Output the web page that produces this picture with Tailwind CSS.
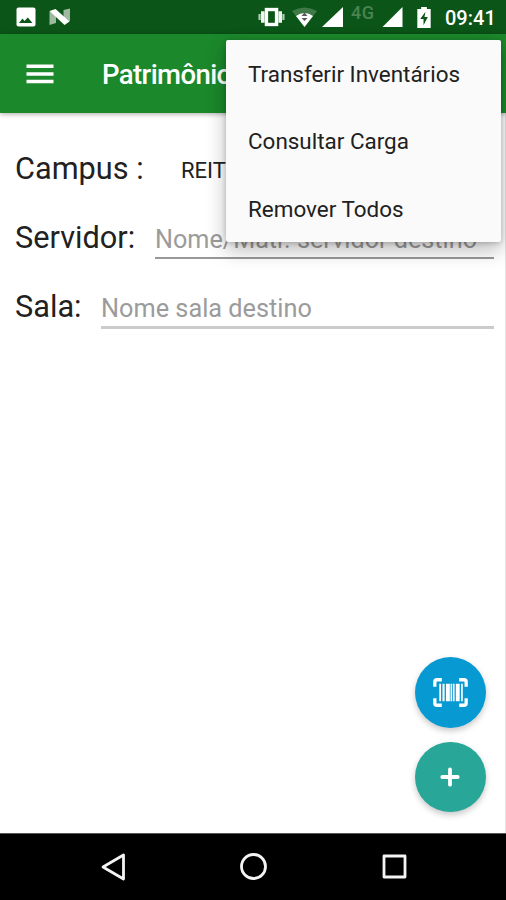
<!DOCTYPE html>
<html lang="pt-BR">
<head>
<meta charset="utf-8">
<title>Patrimônio</title>
<script src="https://cdn.jsdelivr.net/npm/@tailwindcss/browser@4"></script>
</head>
<body class="bg-white">
<div class="relative flex h-[900px] w-[506px] flex-col overflow-hidden bg-white font-[Roboto,sans-serif] text-[#212121]">
  <header class="flex h-[34px] shrink-0 items-center bg-[#0c5518] pl-4 text-white">
    <svg class="size-5" viewBox="0 0 20 20"><rect x=".5" y=".5" width="19" height="19" rx="2" fill="#fff"/><path d="M3 16 6.500 11.500l2 2.500 3.300-3.500 4.700 5.500z" fill="#0c5518"/></svg>
    <svg class="ml-[13px] h-[18px] w-[22px]" viewBox="0 0 22 18"><path d="M.5 3.500 7 6v9L.5 17zM14.500 2 21 .5V13l-6.500 2z" fill="#9dbaa1"/><path d="M.5 3 6.500 1 20.500 13.500 15.500 17z" fill="#fff"/></svg>
    <svg class="ml-[187px] h-5 w-[27px]" viewBox="0 0 28 20"><path d="M7 .5h14v19H7z" fill="#fff"/><path d="M10.500 4h7v12h-7z" fill="#0c5518"/><path d="M5 4v12M23 4v12" stroke="#eef4ee" stroke-width="3.800"/><path d="M1.600 7v6M26.400 7v6" stroke="#b8cfba" stroke-width="2.200"/></svg>
    <svg class="ml-[7px] h-5 w-[25px]" viewBox="0 0 25 20"><path d="M0 4Q12.500-3 25 4L12.500 20z" fill="#3f7a48"/><path d="M4 9Q12.500 3 21 9L12.500 20z" fill="#fff"/><path d="m12.500 5.500 3 3.500h-6zM9.500 11h6l-3 3z" fill="#5a5a5a"/></svg>
    <svg class="ml-[5px] h-5 w-[21px]" viewBox="0 0 21 20"><path d="M21 0v20H0z" fill="#fff"/></svg>
    <span class="relative -top-[4px] ml-2 w-[25px] text-[18px] leading-5 font-medium tracking-[.5px] text-[#4a8352]">4G</span>
    <svg class="ml-[6px] h-5 w-[21px]" viewBox="0 0 20 20"><path d="M20 0v20H0z" fill="#fff"/></svg>
    <svg class="ml-[14px] h-[21px] w-[14px]" viewBox="0 0 14 22"><path d="M4 0h6v2h4v20H0V2h4z" fill="#fff"/><path d="M8.500 5 3 12.500h3.500V19L11 10.500H7.500z" fill="#0c5518"/></svg>
    <span class="mt-[2px] ml-[14px] text-[20px] leading-5 font-medium">09:41</span>
  </header>

  <div class="z-10 flex h-[79px] shrink-0 items-center bg-[#1b882b] pl-[26px] shadow-[0_1px_5px_rgba(0,0,0,.35)]">
    <svg class="h-5 w-[28px]" viewBox="0 0 28 20" fill="#fff"><path d="M.5 .5h27v3.500H.5zM.5 8.200h27v3.500H.5zM.5 15.700h27v3.500H.5z"/></svg>
    <h1 class="mt-[3px] ml-[48px] text-[27.500px] leading-8 font-medium tracking-[-.6px] text-white">Patrimônio</h1>
  </div>

  <main class="flex-1 border-r border-[#e4e4e4] pt-[21px] pr-[11px] pl-[15px]">
    <div class="flex h-[69px] items-center">
      <span class="w-[166px] text-[30.700px] leading-9">Campus :</span>
      <span class="mt-[4px] text-[22px] leading-7">REITORIA</span>
    </div>
    <div class="flex h-[69px] items-center">
      <span class="w-[140px] text-[30.700px] leading-9">Servidor:</span>
      <span class="mt-[2px] h-[41px] flex-1 border-b-2 border-[#989898] pt-[5px] text-[25.200px] leading-8 whitespace-nowrap text-[#9b9b9b]"><span class="relative top-px">Nome/Matr. servidor destino</span></span>
    </div>
    <div class="flex h-[69px] items-center">
      <span class="w-[86px] text-[30.700px] leading-9">Sala:</span>
      <span class="mt-[3px] h-[42px] flex-1 border-b-3 border-[#cbcbcb] pt-[6px] text-[25.300px] leading-8 whitespace-nowrap text-[#9b9b9b]">Nome sala destino</span>
    </div>
  </main>

  <nav class="flex h-[67px] shrink-0 items-center border-t border-[#555] bg-black pl-[101px]">
    <svg class="size-7" viewBox="0 0 28 28" fill="none" stroke="#f4f4f4" stroke-width="2.800" stroke-linejoin="round"><path d="M22.500 2v24L2 14z"/></svg>
    <svg class="ml-[111px] size-7" viewBox="0 0 28 28" fill="none" stroke="#f4f4f4" stroke-width="2.800"><circle cx="13.500" cy="13.500" r="12"/></svg>
    <svg class="ml-[112px] size-7" viewBox="0 0 28 28" fill="none" stroke="#f4f4f4" stroke-width="2.800" stroke-linejoin="round"><path d="M4 3h21v21H4z"/></svg>
  </nav>

  <div class="absolute top-[40px] left-[226px] z-20 flex h-[202px] w-[275px] flex-col rounded-[2px] bg-[#fafafa] pt-px pl-[22px] text-[22.450px] shadow-[0_8px_20px_rgba(0,0,0,.27),0_1px_5px_rgba(0,0,0,.2)]">
    <span class="flex h-[67.500px] shrink-0 items-center">Transferir Inventários</span>
    <span class="flex h-[67.500px] shrink-0 items-center">Consultar Carga</span>
    <span class="flex h-[67.500px] shrink-0 items-center">Remover Todos</span>
  </div>

  <div class="absolute top-[657px] left-[415px] z-10 flex flex-col gap-[14px]">
    <button class="flex size-[70.500px] items-center justify-center rounded-full bg-[#0799d2] shadow-[0_3px_6px_rgba(0,0,0,.22)]">
      <svg class="h-[29px] w-[35px]" viewBox="0 0 36 30" fill="none" stroke="#fff"><path d="M1.800 9V4q0-2.200 2.200-2.200h5M27 1.800h5q2.200 0 2.200 2.200v5M34.200 21v5q0 2.200-2.200 2.200h-5M9 28.200H4Q1.800 28.200 1.800 26v-5" stroke-width="3.400"/><path d="M7.300 6v18M21.300 6v18M29.800 6v18" stroke-width="1.800"/><path d="M10.800 6v18" stroke-width="2.200"/><path d="M15.300 6v18M25.500 6v18" stroke-width="4"/><path d="M18.800 6v18" stroke-width="1.500"/></svg>
    </button>
    <button class="flex size-[70.500px] items-center justify-center rounded-full bg-[#28a799] shadow-[0_3px_6px_rgba(0,0,0,.22)]">
      <svg class="size-5" viewBox="0 0 20 20" fill="none" stroke="#fff" stroke-width="3.800" stroke-linecap="round"><path d="M10 2.300v15.400M2.300 10h15.400"/></svg>
    </button>
  </div>
</div>
</body>
</html>
